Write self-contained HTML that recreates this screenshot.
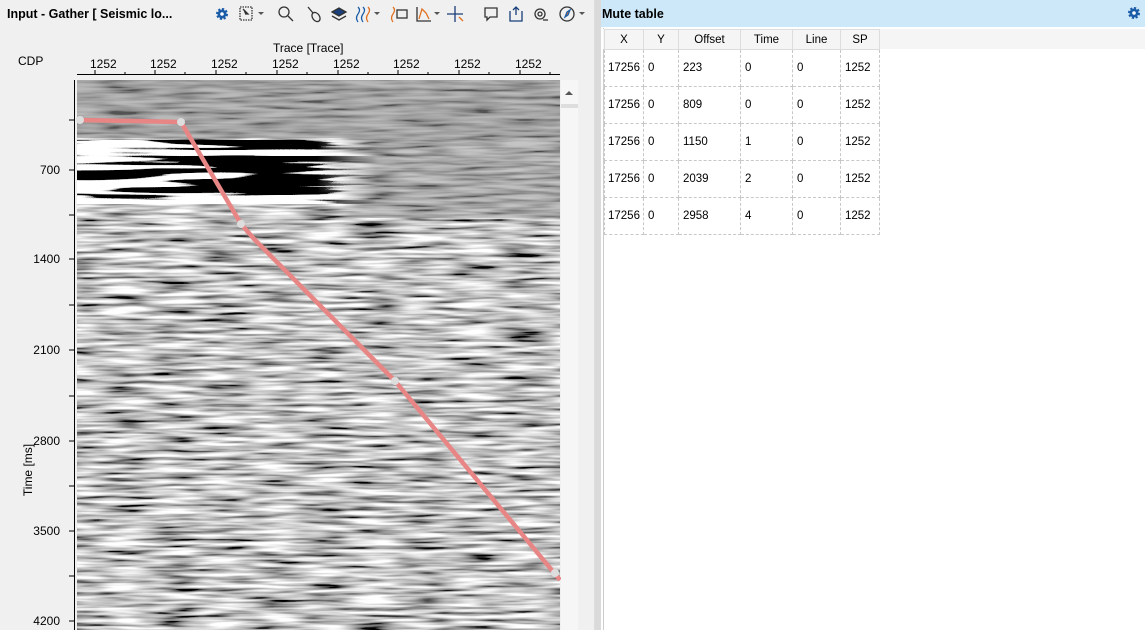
<!DOCTYPE html>
<html><head><meta charset="utf-8"><style>
*{margin:0;padding:0;box-sizing:border-box}
body{width:1145px;height:630px;overflow:hidden;background:#f0f0f0;font-family:"Liberation Sans",sans-serif;font-size:12px;color:#000;position:relative}
.a{position:absolute}
table{border-collapse:collapse;font-size:11.5px}
td,th{border:1px dashed #c8c8c8;padding:0 0 0 4px;text-align:left;font-weight:normal;white-space:nowrap;overflow:hidden}
th{text-align:center;padding:0;background:#f5f5f5;border:1px solid #ddd;height:20px}
td{height:37px}
</style></head><body>
<div class="a" style="left:0;top:0;width:595px;height:630px;background:#f0f0f0;border-right:1px solid #ddd"></div>
<div class="a" style="left:7px;top:7px;font-weight:bold;font-size:12.5px">Input - Gather [ Seismic lo...</div>
<svg class="a" style="left:210px;top:3px" width="385" height="22" viewBox="0 0 385 22">
 <g fill="none" stroke="#333" stroke-width="1.3">
  <circle cx="12" cy="11" r="4.5" fill="#1a5ca8" stroke="#1a5ca8" stroke-width="3" stroke-dasharray="2 1.5"/><circle cx="12" cy="11" r="1.8" fill="#fff" stroke="none"/>
  <rect x="30" y="4" width="12" height="13" stroke-dasharray="1.5 1"/><path d="M33 6l5 5h-3" fill="#333"/>
  <path d="M48 9l3 3l3-3z" fill="#555" stroke="none"/>
  <circle cx="74" cy="9" r="5"/><path d="M78 13l5 5"/>
  <path d="M98 4l5 6"/><ellipse cx="106" cy="14" rx="3.5" ry="5" transform="rotate(-35 106 14)"/>
  <path d="M122 9l7-4l7 4l-7 4z" fill="#1a3f7a"/><path d="M122 13l7 4l7-4"/>
  <path d="M148 4q3 3 0 7q-3 4 0 8M153 4q3 3 0 7q-3 4 0 8" stroke="#1a5ca8"/><path d="M158 4q3 3 0 7q-3 4 0 8" stroke="#e07020"/>
  <path d="M164 9l3 3l3-3z" fill="#555" stroke="none"/>
  <path d="M183 4q3 3 0 7q-3 4 0 8" stroke="#e07020"/><rect x="187" y="7" width="10" height="8"/>
  <path d="M207 4v14h14"/><path d="M209 16l3-10l4 4l3 6" stroke="#e07020"/>
  <path d="M224 9l3 3l3-3z" fill="#555" stroke="none"/>
  <path d="M245 3v16M237 11h16" stroke="#1a3f7a"/><path d="M249 14l4 4" stroke="#e07020"/>
  <path d="M275 5h12v9h-7l-3 3v-3h-2z"/>
  <path d="M300 8v10h12v-10M306 4v8M303 7l3-3l3 3" stroke="#1a3f7a"/>
  <circle cx="330" cy="11" r="5"/><circle cx="330" cy="11" r="2"/><path d="M333 17h5"/>
  <circle cx="357" cy="11" r="7"/><path d="M360 7l-2 5l-3 2l2-5z" fill="#e07020" stroke="#1a5ca8"/>
  <path d="M369 9l3 3l3-3z" fill="#555" stroke="none"/>
 </g></svg>
<div class="a" style="left:273px;top:41px;font-size:12px">Trace [Trace]</div>
<div class="a" style="left:18px;top:54px">CDP</div>
<div class="a" style="left:0;top:57px;width:600px;height:14px">
 <span class="a" style="left:90px">1252</span><span class="a" style="left:150px">1252</span><span class="a" style="left:211px">1252</span><span class="a" style="left:272px">1252</span><span class="a" style="left:333px">1252</span><span class="a" style="left:393px">1252</span><span class="a" style="left:454px">1252</span><span class="a" style="left:515px">1252</span>
</div>
<svg class="a" style="left:0;top:0" width="600" height="630">
 <defs>
  <filter id="n" x="0" y="0" width="100%" height="100%">
   <feTurbulence type="fractalNoise" baseFrequency="0.02 0.26" numOctaves="2" seed="4"/>
   <feColorMatrix type="matrix" values="1 0 0 0 0  1 0 0 0 0  1 0 0 0 0  0 0 0 0 1"/>
   <feComponentTransfer><feFuncR type="linear" slope="2" intercept="-0.45"/><feFuncG type="linear" slope="2" intercept="-0.45"/><feFuncB type="linear" slope="2" intercept="-0.45"/></feComponentTransfer>
  </filter>
  <filter id="h" x="0" y="0" width="100%" height="100%">
   <feTurbulence type="fractalNoise" baseFrequency="0.006 0.16" numOctaves="2" seed="9"/>
   <feColorMatrix type="matrix" values="1 0 0 0 0  1 0 0 0 0  1 0 0 0 0  0 0 0 0 1"/>
   <feComponentTransfer><feFuncR type="linear" slope="20" intercept="-9.5"/><feFuncG type="linear" slope="20" intercept="-9.5"/><feFuncB type="linear" slope="20" intercept="-9.5"/></feComponentTransfer>
  </filter>
  <linearGradient id="fade" x1="0" x2="1"><stop offset="0" stop-color="#fff"/><stop offset="0.8" stop-color="#fff"/><stop offset="1" stop-color="#000"/></linearGradient>
  <linearGradient id="gr" x1="0" x2="1"><stop offset="0" stop-color="#8a8a8a" stop-opacity="0"/><stop offset="0.15" stop-color="#8a8a8a" stop-opacity="0.5"/><stop offset="1" stop-color="#8a8a8a" stop-opacity="0.5"/></linearGradient>
  <mask id="m"><rect x="77" y="140" width="300" height="64" fill="url(#fade)"/></mask>
 </defs>
 <rect x="77" y="80" width="483" height="550" fill="#888"/>
 <rect x="77" y="80" width="483" height="550" filter="url(#n)"/>
 <rect x="77" y="80" width="483" height="58" fill="#8a8a8a" opacity="0.6"/>
 <rect x="340" y="138" width="220" height="80" fill="url(#gr)"/>
 <rect x="77" y="140" width="300" height="64" filter="url(#h)" mask="url(#m)"/>
 <path d="M77 74.5H560M74.5 80V630" stroke="#000" fill="none"/>
 <g stroke="#000">
  <path d="M95 70v5M125 72v3M155 70v5M185 72v3M216 70v5M246 72v3M277 70v5M307 72v3M338 70v5M368 72v3M398 70v5M428 72v3M459 70v5M489 72v3M520 70v5M550 72v3"/>
  <path d="M69 120h5M69 170h5M69 215h5M69 259h5M69 305h5M69 350h5M69 396h5M69 441h5M69 486h5M69 531h5M69 576h5M69 621h5"/>
 </g>
 <g font-size="12" text-anchor="end" font-family="Liberation Sans"><text x="60" y="174">700</text><text x="60" y="263">1400</text><text x="60" y="354">2100</text><text x="60" y="445">2800</text><text x="60" y="535">3500</text><text x="60" y="625">4200</text></g>
 <text transform="translate(32 470) rotate(-90)" font-size="12" text-anchor="middle" font-family="Liberation Sans">Time [ms]</text>
 <polyline points="80,120 181,122 241,224 255,240 395,381 560,580" fill="none" stroke="#e88585" stroke-width="4.5" stroke-linejoin="round"/>
 <g fill="#ddd"><circle cx="80" cy="120" r="4"/><circle cx="181" cy="122" r="4"/><circle cx="241" cy="224" r="4"/><circle cx="395" cy="381" r="4"/><circle cx="555" cy="573" r="4"/></g>
 <rect x="561" y="80" width="17" height="550" fill="#f6f6f6"/>
 <path d="M565 95l4-4l4 4z" fill="#555"/>
 <rect x="561" y="104" width="17" height="4" fill="#ddd"/>
</svg>
<div class="a" style="left:595px;top:0;width:6px;height:630px;background:#dadada"></div>
<div class="a" style="left:601px;top:0;width:544px;height:630px;background:#fff"></div>
<div class="a" style="left:601px;top:0;width:544px;height:27px;background:#cde8f8"></div>
<div class="a" style="left:602px;top:7px;font-weight:bold;font-size:12.5px">Mute table</div>
<svg class="a" style="left:1126px;top:5px" width="16" height="16"><circle cx="8" cy="8" r="4.5" fill="#1a5ca8" stroke="#1a5ca8" stroke-width="3" stroke-dasharray="2 1.5"/><circle cx="8" cy="8" r="1.8" fill="#fff"/></svg>
<div class="a" style="left:603px;top:28px;width:542px;height:602px;border-left:1px solid #ccc"></div>
<div class="a" style="left:603px;top:29px;width:542px;height:20px;background:#f5f5f5"></div>
<table class="a" style="left:604px;top:29px;table-layout:fixed;width:275px">
<tr><th style="width:39px">X</th><th style="width:35px">Y</th><th style="width:62px">Offset</th><th style="width:52px">Time</th><th style="width:48px">Line</th><th style="width:39px">SP</th></tr>
<tr><td style="padding-left:3px">17256</td><td>0</td><td>223</td><td>0</td><td>0</td><td>1252</td></tr>
<tr><td style="padding-left:3px">17256</td><td>0</td><td>809</td><td>0</td><td>0</td><td>1252</td></tr>
<tr><td style="padding-left:3px">17256</td><td>0</td><td>1150</td><td>1</td><td>0</td><td>1252</td></tr>
<tr><td style="padding-left:3px">17256</td><td>0</td><td>2039</td><td>2</td><td>0</td><td>1252</td></tr>
<tr><td style="padding-left:3px">17256</td><td>0</td><td>2958</td><td>4</td><td>0</td><td>1252</td></tr>
</table>
</body></html>
